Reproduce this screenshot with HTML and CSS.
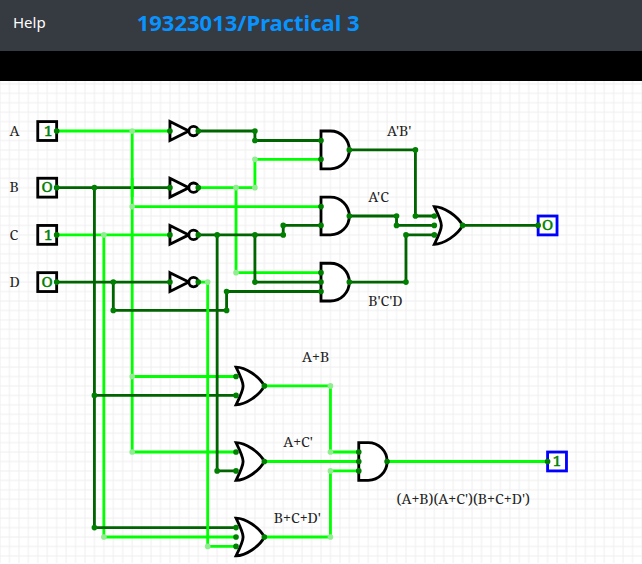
FILE: index.html
```html
<!DOCTYPE html>
<html lang="en">
<head>
<meta charset="utf-8">
<title>19323013/Practical 3</title>
<link rel="stylesheet" href="styles.css">
</head>
<body>
<header class="navbar">
  <nav><a class="nav-link" href="#">Help</a></nav>
  <h1 class="project-name">19323013/Practical 3</h1>
</header>
<div class="tab-strip"></div>
<main class="workspace">
<svg class="circuit" viewBox="0 -53 680 511" role="img" aria-label="Logic circuit">
  <defs>
    <pattern id="grid" width="10" height="10" patternUnits="userSpaceOnUse">
      <path class="grid-line" d="M0 0H10M0 0V10M10 0V10M0 10H10"/>
    </pattern>
    <g id="not"><path class="gate" d="M-10 -10L10 0L-10 10Z"/><circle class="gate" cx="15" cy="0" r="5"/></g>
    <path id="and" class="gate" d="M0 -20H10A20 20 0 0 1 10 20H0Z"/>
    <path id="or" class="gate" d="M-10 -20C0 -20 15 -10 20 0C15 10 0 20 -10 20C0 0 0 0 -10 -20Z"/>
  </defs>
  <rect x="0" y="-60" width="680" height="540" fill="url(#grid)"/>

  <g>
    <use href="#not" x="190" y="0"/>
    <use href="#not" x="190" y="60"/>
    <use href="#not" x="190" y="110"/>
    <use href="#not" x="190" y="160"/>
    <use href="#and" x="340" y="20"/>
    <use href="#and" x="340" y="90"/>
    <use href="#and" x="340" y="160"/>
    <use href="#and" x="380" y="350"/>
    <use href="#or" x="470" y="100"/>
    <use href="#or" x="260" y="270"/>
    <use href="#or" x="260" y="350"/>
    <use href="#or" x="260" y="430"/>
  </g>

  <g class="wire high">
    <path d="M60 0H180M140 0V340H250M140 80H340M140 260H250"/>
    <path d="M60 110H180M110 110V430H250"/>
    <path d="M210 60H270V30H340M250 60V150H340"/>
    <path d="M280 270H350V340H380M280 350H380M280 430H350V360H380M410 350H580"/>
  </g>
  <g class="wire low">
    <path d="M60 60H180M100 60V420H250M100 280H250"/>
    <path d="M60 160H180M120 160V190H240V170H340"/>
    <path d="M210 0H270V10H340"/>
    <path d="M210 110H300V100H340M270 110V160H340M230 110V360H250"/>
    <path d="M370 20H440V90H460M370 90H420V100H460M370 160H430V110H460M490 100H570"/>
  </g>
  <path class="wire high" d="M140 50V70M210 160H220V440H250"/>

  <g class="box">
    <rect x="40" y="-10" width="20" height="20"/>
    <rect x="40" y="50" width="20" height="20"/>
    <rect x="40" y="100" width="20" height="20"/>
    <rect x="40" y="150" width="20" height="20"/>
  </g>
  <g class="box output">
    <rect x="570" y="90" width="20" height="20"/>
    <rect x="580" y="340" width="20" height="20"/>
  </g>

  <!-- Zero-length round-capped segments form the connection points. -->
  <path class="node high" d="M140 0h0M140 80h0M140 260h0M140 340h0M110 110h0M110 430h0M250 60h0M270 60h0M270 30h0M250 150h0M220 160h0M220 440h0M350 270h0M350 340h0M350 360h0M350 430h0"/>
  <path class="node" d="M60 0h0M60 60h0M60 110h0M60 160h0M180 0h0M180 60h0M180 110h0M180 160h0M210 0h0M210 60h0M210 110h0M210 160h0M100 60h0M100 280h0M100 420h0M120 160h0M120 190h0M240 190h0M240 170h0M270 0h0M270 10h0M230 110h0M230 360h0M270 110h0M270 160h0M300 110h0M300 100h0M340 10h0M340 30h0M340 80h0M340 100h0M340 150h0M340 160h0M340 170h0M370 20h0M370 90h0M370 160h0M440 20h0M440 90h0M420 90h0M420 100h0M430 160h0M430 110h0M460 90h0M460 100h0M460 110h0M490 100h0M570 100h0M250 260h0M250 280h0M280 270h0M250 340h0M250 360h0M280 350h0M250 420h0M250 430h0M250 440h0M280 430h0M380 340h0M380 350h0M380 360h0M410 350h0M580 350h0"/>

  <g class="value">
    <text x="51" y="5">1</text>
    <text x="50" y="65">O</text>
    <text x="51" y="115">1</text>
    <text x="50" y="165">O</text>
    <text x="580" y="105">O</text>
    <text x="590" y="355">1</text>
  </g>
  <g class="label">
    <text x="10" y="5">A</text>
    <text x="10" y="65">B</text>
    <text x="10" y="115">C</text>
    <text x="10" y="165">D</text>
    <text x="410" y="5">A'B'</text>
    <text x="390" y="75">A'C</text>
    <text x="390" y="185">B'C'D</text>
    <text x="320" y="245">A+B</text>
    <text x="300" y="335">A+C'</text>
    <text x="290" y="415">B+C+D'</text>
    <text x="420" y="395">(A+B)(A+C')(B+C+D')</text>
  </g>
</svg>
</main>
</body>
</html>
```
FILE: styles.css
```css
* { box-sizing: border-box; }
body { margin: 0; background: #fff; font-family: "Noto Sans", "Open Sans", sans-serif; }
.navbar {
  display: flex;
  align-items: center;
  gap: 91px;
  padding: 0 13px 8px;
  height: 51px;
  background: #363a41;
}
.nav-link { color: #fff; font-size: 15px; text-decoration: none; }
.project-name { margin: 0; color: #0893ff; font-size: 22px; font-weight: 700; line-height: 30px; white-space: nowrap; }
.tab-strip { height: 30px; background: #000; }
.circuit { display: block; width: 100%; }
.grid-line { fill: none; stroke: #eee; stroke-width: 1; }
.gate { fill: #fff; stroke: #000; stroke-width: 3; }
.wire { fill: none; stroke-width: 3; }
.wire.high { stroke: #0f0; }
.wire.low { stroke: #006400; }
.box { fill: #fff; stroke: #000; stroke-width: 3; }
.box.output { stroke: #00f; }
.node { fill: none; stroke: #008000; stroke-width: 6; stroke-linecap: round; }
.node.high { stroke: #90ee90; }
.value { fill: #008000; stroke: #008000; stroke-width: 0.5; font: 400 16px "Noto Serif", "Liberation Serif", serif; text-anchor: middle; }
.label { fill: #222; font: 15px "Noto Serif", "Liberation Serif", serif; }
```
